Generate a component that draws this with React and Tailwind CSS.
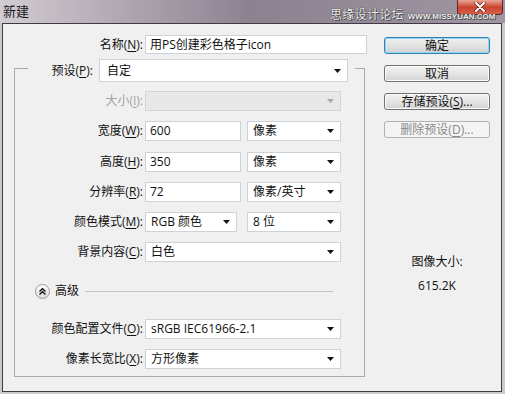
import React from 'react';

function Arrow({ muted }) {
  return (
    <svg width="7" height="4" viewBox="0 0 7 4" className="shrink-0">
      <path d="M0 0H7L3.5 4Z" fill={muted ? '#a9a9a9' : '#111'} />
    </svg>
  );
}

function Input({ value, className = '' }) {
  return (
    <div className={`flex h-full items-center border border-[#cdd2d8] bg-white pl-[4px] ${className}`}>
      <span>{value}</span>
    </div>
  );
}

function Select({ value, className = '', disabled }) {
  return (
    <div
      className={`flex h-full items-center justify-between border pl-[5px] pr-[6px] ${
        disabled ? 'border-[#d4d4d4] bg-[#e8e8e8]' : 'border-[#cdd2d8] bg-white'
      } ${className}`}
    >
      <span>{value}</span>
      <Arrow muted={disabled} />
    </div>
  );
}

function K({ children }) {
  return <span className="underline underline-offset-[2px]">{children}</span>;
}

function Row({ label, muted, className = '', children }) {
  return (
    <div className={`flex h-[20px] items-center gap-[2px] ${className}`}>
      <div className={`w-[128px] text-right ${muted ? 'text-[#a3a3a3]' : ''}`}>{label}</div>
      <div className="flex h-full gap-[6px]">{children}</div>
    </div>
  );
}

function Btn({ children, primary, disabled }) {
  let cls = 'border-[#707070] bg-linear-to-b from-[#f2f2f2] via-[#e6e6e6] to-[#d2d2d2] shadow-[inset_0_0_0_1px_#fcfcfc]';
  if (primary) cls = 'border-[#3c7fb1] bg-linear-to-b from-[#f0f0f0] via-[#e4e4e4] to-[#d0d0d0] shadow-[inset_0_0_0_1px_#8ad8f6,0_0_1px_#9fe0ff]';
  if (disabled) cls = 'border-[#adb2b5] bg-[#f4f4f4] text-[#8a8a8a]';
  return (
    <div className={`flex h-[17px] w-[106px] items-center justify-center rounded-[3px] border leading-none ${cls}`}>
      {children}
    </div>
  );
}

export default function App() {
  return (
    <div className="relative h-[394px] w-[505px] overflow-hidden bg-[#cfc9cf] font-['Open_Sans','Noto_Sans_CJK_SC',sans-serif] text-[12px] text-[#111]">
      {/* title bar */}
      <div className="flex h-[23px] items-start justify-between bg-linear-to-r from-[#d3ccd2] via-[#8d8190] to-[#a096a2]">
        <span className="pl-[3px] pt-[3px] text-[13px] leading-[16px] text-[#1a1a1a]">新建</span>
        <div className="mr-[2px] flex h-[15px] w-[46px] items-center justify-center rounded-b-[4px] border border-t-0 border-[#5c2a25] bg-linear-to-b from-[#e9a497] via-[#c9442d] to-[#d8604a]">
          <svg width="12" height="10" viewBox="0 0 12 10">
            <path d="M2 1L10 9M10 1L2 9" stroke="#5a1e16" strokeWidth="3.2" strokeLinecap="round" />
            <path d="M2 1L10 9M10 1L2 9" stroke="#fff" strokeWidth="2" strokeLinecap="round" />
          </svg>
        </div>
      </div>
      <div className="absolute left-[330px] top-[7px] flex items-end gap-[4px] whitespace-nowrap text-[#ededed] [text-shadow:0_0_1px_#444,0_0_1px_#444,1px_1px_0_#555]">
        <span className="text-[12px] leading-[16px] tracking-[0.3px]">思缘设计论坛</span>
        <span className="pb-[1px] font-['Liberation_Sans',sans-serif] text-[8px] font-bold leading-[10px]">WWW.MISSYUAN.COM</span>
      </div>

      {/* dialog body */}
      <div className="ml-[2px] flex h-[369px] w-[500px] border border-[#3f3a44] bg-[#f0f0f0]">
        <div className="w-[365px] pt-[11px]">
          <div className="flex h-[19px] items-center gap-[2px]">
            <div className="w-[140px] text-right">
              名称(<K>N</K>):
            </div>
            <Input value="用PS创建彩色格子icon" className="w-[222px] border-[#b9c9d9]" />
          </div>

          <fieldset className="ml-[11px] mt-[1px] w-[351px] border border-[#a9a9a9] pb-[7px]">
            <legend className="ml-[13px] pr-[7px] pt-[4px]">
              <div className="flex h-[23px] items-center gap-[6px]">
                <div className="w-[65px] text-right">
                  预设(<K>P</K>):
                </div>
                <Select value="自定" className="w-[249px] pl-[7px]" />
              </div>
            </legend>

            <div className="flex flex-col gap-[10px] pt-[9px]">
              <Row label={<>大小(<K>I</K>):</>} muted>
                <Select value="" disabled className="w-[196px]" />
              </Row>
              <Row label={<>宽度(<K>W</K>):</>}>
                <Input value="600" className="w-[96px]" />
                <Select value="像素" className="w-[94px]" />
              </Row>
              <Row label={<>高度(<K>H</K>):</>} className="mt-px">
                <Input value="350" className="w-[96px]" />
                <Select value="像素" className="w-[94px]" />
              </Row>
              <Row label={<>分辨率(<K>R</K>):</>}>
                <Input value="72" className="w-[96px]" />
                <Select value="像素/英寸" className="w-[94px]" />
              </Row>
              <Row label={<>颜色模式(<K>M</K>):</>}>
                <Select value="RGB 颜色" className="w-[92px] pl-[3px]" />
                <Select value="8 位" className="ml-[4px] w-[94px]" />
              </Row>
              <Row label={<>背景内容(<K>C</K>):</>}>
                <Select value="白色" className="w-[196px]" />
              </Row>
            </div>

            <div className="mt-[21px] flex h-[16px] items-center">
              <div className="ml-[20px] flex h-[15px] w-[15px] items-center justify-center rounded-full border border-[#9a9a9a] bg-linear-to-b from-white to-[#dcdcdc]">
                <svg width="9" height="9" viewBox="0 0 9 9">
                  <path d="M1.5 4.5L4.5 1.8L7.5 4.5M1.5 7.5L4.5 4.8L7.5 7.5" stroke="#111" strokeWidth="1.4" fill="none" />
                </svg>
              </div>
              <span className="ml-[5px]">高级</span>
              <div className="ml-[6px] mr-[31px] h-px flex-1 bg-[#c4c4c4]" />
            </div>

            <div className="mt-[20px] flex flex-col gap-[10px]">
              <Row label={<>颜色配置文件(<K>O</K>):</>}>
                <Select value="sRGB IEC61966-2.1" className="w-[196px] pl-[4px]" />
              </Row>
              <Row label={<>像素长宽比(<K>X</K>):</>}>
                <Select value="方形像素" className="w-[196px] pl-[4px]" />
              </Row>
            </div>
          </fieldset>
        </div>

        <div className="flex flex-col pl-[16px] pt-[13px]">
          <div className="flex flex-col gap-[11px]">
            <Btn primary>确定</Btn>
            <Btn>取消</Btn>
            <Btn>
              存储预设(<K>S</K>)...
            </Btn>
            <Btn disabled>
              删除预设(<K>D</K>)...
            </Btn>
          </div>
          <div className="mt-[116px] flex w-[106px] flex-col items-center gap-[8px] leading-[16px]">
            <span>图像大小:</span>
            <span>615.2K</span>
          </div>
        </div>
      </div>
    </div>
  );
}
